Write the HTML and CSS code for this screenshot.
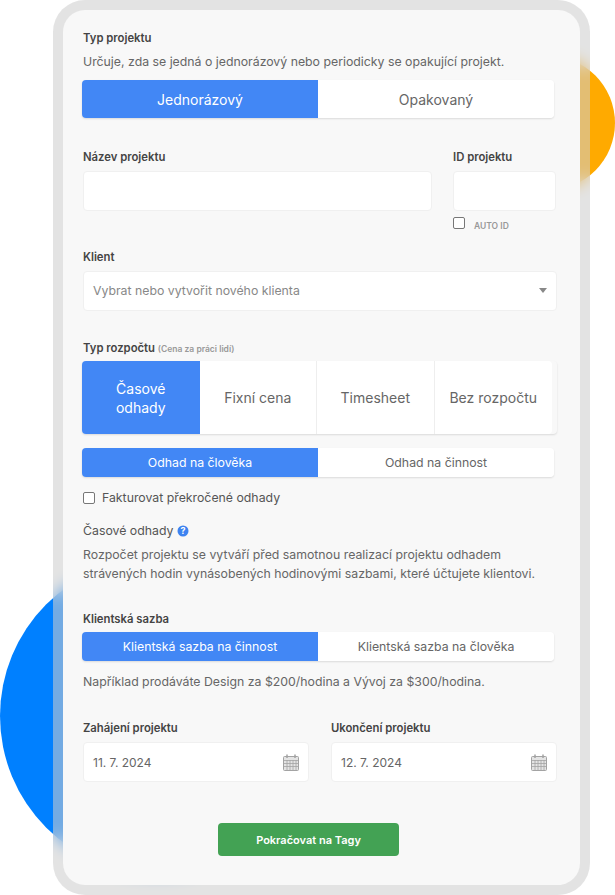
FILE: index.html
```html
<!DOCTYPE html>
<html lang="en">
<head>
  <meta charset="UTF-8" />
  <meta name="viewport" content="width=device-width, initial-scale=1.0" />
  <title>Nový projekt</title>
  <link rel="stylesheet" href="styles.css">
</head>
<body>
  <div class="circle circle-blue"></div>
  <div class="circle circle-orange"></div>

  <div class="frame">
    <form class="panel">
      <section class="type-section">
        <h4 class="label">Typ projektu</h4>
        <p class="hint">Určuje, zda se jedná o jednorázový nebo periodicky se opakující projekt.</p>
        <div class="tabs tabs-big">
          <button type="button" class="tab active">Jednorázový</button>
          <button type="button" class="tab">Opakovaný</button>
        </div>
      </section>

      <section class="name-row">
        <div class="name-col">
          <label class="label">Název projektu</label>
          <input type="text" class="field" />
        </div>
        <div class="id-col">
          <label class="label">ID projektu</label>
          <input type="text" class="field" />
          <div class="auto-id"><span class="check"></span><span class="auto-text">AUTO ID</span></div>
        </div>
      </section>

      <section class="client-section">
        <label class="label">Klient</label>
        <div class="field select">
          <span>Vybrat nebo vytvořit nového klienta</span>
          <span class="arrow"></span>
        </div>
      </section>

      <section class="budget-section">
        <h4 class="label">Typ rozpočtu <small>(Cena za práci lidí)</small></h4>
        <div class="budget-tabs">
          <button type="button" class="budget active">Časové<br>odhady</button>
          <button type="button" class="budget">Fixní cena</button>
          <button type="button" class="budget">Timesheet</button>
          <button type="button" class="budget">Bez rozpočtu</button>
        </div>
        <div class="tabs tabs-small">
          <button type="button" class="tab active">Odhad na člověka</button>
          <button type="button" class="tab">Odhad na činnost</button>
        </div>
        <div class="overrun"><span class="check"></span><span>Fakturovat překročené odhady</span></div>
        <div class="estimate-title">
          <span>Časové odhady</span>
          <svg class="help" width="12" height="12" viewBox="0 0 12 12">
            <circle cx="6" cy="6" r="5.5" fill="#3d83f0" />
            <text x="6" y="9" text-anchor="middle" class="help-mark">?</text>
          </svg>
        </div>
        <p class="hint estimate-text">Rozpočet projektu se vytváří před samotnou realizací projektu odhadem<br>strávených hodin vynásobených hodinovými sazbami, které účtujete klientovi.</p>
      </section>

      <section class="rate-section">
        <h4 class="label">Klientská sazba</h4>
        <div class="tabs tabs-small">
          <button type="button" class="tab active">Klientská sazba na činnost</button>
          <button type="button" class="tab">Klientská sazba na člověka</button>
        </div>
        <p class="hint rate-text">Například prodáváte Design za $200/hodina a Vývoj za $300/hodina.</p>
      </section>

      <section class="dates-row">
        <div class="date-col">
          <label class="label">Zahájení projektu</label>
          <div class="field date">
            <span>11. 7. 2024</span>
            <svg class="cal" width="16" height="17" viewBox="0 0 16 17">
              <rect x="0.5" y="2.5" width="15" height="14" rx="1" fill="#e4e4e4" stroke="#a3a3a3" />
              <path d="M1 6.5h14M1 9.5h14M1 12.5h14M4 6v10M7 6v10M10 6v10M13 6v10" stroke="#a3a3a3" stroke-width=".8" fill="none" />
              <path d="M4 .5v3.500M12 .5v3.500" stroke="#a3a3a3" stroke-width="1.500" fill="none" />
            </svg>
          </div>
        </div>
        <div class="date-col">
          <label class="label">Ukončení projektu</label>
          <div class="field date">
            <span>12. 7. 2024</span>
            <svg class="cal" width="16" height="17" viewBox="0 0 16 17">
              <rect x="0.5" y="2.5" width="15" height="14" rx="1" fill="#e4e4e4" stroke="#a3a3a3" />
              <path d="M1 6.5h14M1 9.5h14M1 12.5h14M4 6v10M7 6v10M10 6v10M13 6v10" stroke="#a3a3a3" stroke-width=".8" fill="none" />
              <path d="M4 .5v3.500M12 .5v3.500" stroke="#a3a3a3" stroke-width="1.500" fill="none" />
            </svg>
          </div>
        </div>
      </section>

      <div class="submit-row">
        <button type="button" class="submit">Pokračovat na Tagy</button>
      </div>
    </form>
  </div>
</body>
</html>
```

FILE: styles.css
```css
* {
  box-sizing: border-box;
}

html, body {
  height: 100%;
}

body {
  margin: 0;
  background-color: #fff;
  font-family: 'Inter', sans-serif;
  color: #555;
  font-size: 12.3px;
  overflow: hidden;
  position: relative;
}

.circle {
  position: absolute;
  border-radius: 50%;
}

.circle-blue {
  left: 0;
  top: 558px;
  width: 316px;
  height: 316px;
  background-color: #0080ff;
}

.circle-orange {
  left: 481px;
  top: 56px;
  width: 134px;
  height: 134px;
  background-color: #ffaa00;
}

.frame {
  position: relative;
  width: 537px;
  height: 895px;
  margin-left: 53px;
  padding: 10px;
  border-radius: 32px;
  background-color: rgba(205, 205, 205, .56);
  backdrop-filter: blur(8px);
}

.panel {
  height: 100%;
  padding: 21px 23px 0 20px;
  border-radius: 22px;
  background-color: #f8f8f8;
}

h4, p {
  margin: 0;
}

.label {
  display: block;
  font-size: 11.3px;
  font-weight: 600;
  line-height: 14px;
  color: #444;
}

.label small {
  font-size: 8.500px;
  font-weight: 600;
  color: #999;
}

.hint {
  font-size: 12.3px;
  line-height: 20px;
  color: #666;
}

.type-section .hint {
  margin-top: 7px;
}

button {
  font-family: inherit;
  border: none;
  cursor: pointer;
}

.tabs {
  display: flex;
  margin: 0 3px 0 -1px;
  border-radius: 4px;
  box-shadow: 0 1px 2px rgba(0, 0, 0, .12);
}

.tab {
  flex: 1;
  padding: 0;
  background-color: #fff;
  color: #666;
}

.tab:first-child {
  border-radius: 4px 0 0 4px;
}

.tab:last-child {
  border-radius: 0 4px 4px 0;
}

.tab.active {
  background-color: #4287f5;
  color: #fff;
}

.tabs-big {
  height: 38px;
  margin-top: 8px;
}

.tabs-big .tab {
  font-size: 14px;
}

.tabs-small {
  height: 29px;
}

.tabs-small .tab {
  font-size: 12.3px;
}

.field {
  display: block;
  width: 100%;
  height: 40px;
  margin-top: 7px;
  border: 1px solid #f0f0f0;
  border-radius: 4px;
  background-color: #fff;
}

.name-row {
  display: flex;
  gap: 21px;
  margin-top: 32px;
}

.name-col {
  width: 349px;
}

.id-col {
  width: 103px;
}

.auto-id {
  display: flex;
  align-items: flex-start;
  gap: 9px;
  height: 18px;
  margin-top: 6px;
  font-size: 8.5px;
  font-weight: 600;
  color: #999;
}

.auto-text {
  padding-top: 4px;
  line-height: 10px;
}

.check {
  display: block;
  flex-shrink: 0;
  width: 12px;
  height: 12px;
  border: 1px solid #777;
  border-radius: 2px;
  background-color: #fff;
}

.client-section {
  margin-top: 15px;
}

.select, .date {
  display: flex;
  align-items: center;
  justify-content: space-between;
  padding: 0 9px;
  font-size: 12.3px;
  color: #666;
}

.date {
  font-size: 12px;
}

.select {
  padding-bottom: 2px;
  color: #888;
}

.arrow {
  width: 0;
  height: 0;
  border-left: 4.5px solid transparent;
  border-right: 4.5px solid transparent;
  border-top: 5px solid #888;
}

.budget-section {
  margin-top: 30px;
}

.budget-tabs {
  display: grid;
  grid-template-columns: repeat(4, 117.5px);
  height: 73px;
  margin: 5px 0 0 -1px;
  border-radius: 4px;
  box-shadow: 0 1px 2px rgba(0, 0, 0, .12);
}

.budget {
  padding: 0;
  background-color: #fff;
  color: #666;
  font-size: 14px;
  line-height: 19px;
  border-right: 1px solid #eee;
}

.budget:last-child {
  border-right: none;
  border-radius: 0 4px 4px 0;
}

.budget.active {
  background-color: #4287f5;
  color: #fff;
  border-right: none;
  border-radius: 4px 0 0 4px;
}

.budget-section .tabs-small {
  margin-top: 14px;
}

.overrun {
  display: flex;
  align-items: center;
  gap: 7px;
  margin-top: 11px;
  line-height: 20px;
}

.estimate-title {
  display: flex;
  align-items: center;
  gap: 4px;
  margin-top: 13px;
  line-height: 20px;
}

.help-mark {
  font-size: 9px;
  font-weight: 700;
  fill: #fff;
}

.estimate-text {
  margin-top: 4px;
  line-height: 19px;
}

.rate-section {
  margin-top: 29px;
}

.rate-section .tabs-small {
  margin-top: 6px;
}

.rate-text {
  margin-top: 11px;
}

.dates-row {
  display: flex;
  gap: 22px;
  margin-top: 29px;
}

.date-col {
  flex: 1;
}

.submit-row {
  margin: 41px 0 0 135px;
}

.submit {
  width: 181px;
  height: 33px;
  border-radius: 4px;
  background-color: #43a254;
  color: #fff;
  font-size: 11px;
  font-weight: 600;
}
```
